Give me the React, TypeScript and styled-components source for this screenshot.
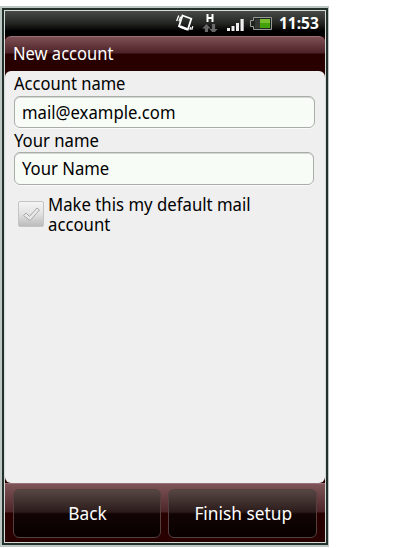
import React from "react";
import styled, { createGlobalStyle } from "styled-components";

const Global = createGlobalStyle`
  * { box-sizing: border-box; }
  body { margin: 0; background: #fff; }
`;

const Page = styled.div`
  width: 400px;
  height: 548px;
  padding-top: 6px;
  overflow: hidden;
  font-family: "Noto Sans", "Open Sans", sans-serif;
`;

const Bezel = styled.div`
  width: 329px;
  height: 541px;
  border: solid #bcc6c2;
  border-width: 2px 1px 2px 2px;
`;

const Rim = styled.div`
  height: 100%;
  border: 2px solid #23302c;
`;

const Screen = styled.div`
  height: 100%;
  border: 1px solid #d5dcd8;
  background: #280000;
  display: flex;
  flex-direction: column;
  overflow: hidden;
`;

const StatusBar = styled.div`
  height: 25px;
  flex: none;
  display: flex;
  justify-content: flex-end;
  background: linear-gradient(#484b48, #232522 50%, #000 80%);
`;

const TitleBar = styled.h1`
  margin: 0;
  height: 35px;
  flex: none;
  padding-left: 8px;
  border-top: 1px solid #987078;
  border-radius: 6px 6px 0 0;
  background: linear-gradient(#7d5053, #4c2228 16px, #280000 17px);
  box-shadow: 0 -6px 0 -2px #000;
  color: #fff;
  font-weight: 400;
`;

const Content = styled.main`
  height: 412px;
  flex: none;
  padding: 0 9px;
  border-radius: 6px;
  background: #efefef;
`;

const Text = styled.span<{ $size: number; $line: number; $condense?: number; $origin?: string }>`
  display: block;
  width: max-content;
  font-size: ${(p) => p.$size}px;
  line-height: ${(p) => p.$line}px;
  white-space: pre;
  transform: scaleX(${(p) => p.$condense ?? 1});
  transform-origin: ${(p) => p.$origin ?? "left"};
`;

const Field = styled.div<{ $width: number; $height: number }>`
  width: ${(p) => p.$width}px;
  height: ${(p) => p.$height}px;
  padding-left: 6.5px;
  border: 1px solid #a9aca9;
  border-radius: 6px;
  background: #f7fcf6;
  box-shadow: inset 0 1px 0 #d4d8d3, 0 1px 0 #fafafa;
`;

const CheckRow = styled.div`
  display: flex;
  gap: 3.5px;
  padding: 9px 0 0 4px;
`;

const CheckBox = styled.div`
  width: 26px;
  height: 26px;
  margin-top: 7px;
  border: 1px solid #c4c4c4;
  border-radius: 2px;
  background: linear-gradient(#f4f4f4, #e4e4e4 45%, #bcbcbc);
`;

const Footer = styled.footer`
  flex: 1;
  display: flex;
  gap: 7px;
  padding: 5px 8px 0;
  border-top: 1px solid #987078;
  background: linear-gradient(#7d5557, #4d2529 28px, #280000 29px);
`;

const Button = styled.div<{ $width: number }>`
  width: ${(p) => p.$width}px;
  height: 49px;
  display: flex;
  justify-content: center;
  padding-left: 1px;
  border: 1px solid #54403f;
  border-radius: 6px;
  background: linear-gradient(#564745, #2b1b1a 22px, #120404 24px, #080000);
  color: #fff;
`;

const StatusIcons = () => (
  <svg width="103" height="25" viewBox="175 11 103 25">
    <g fill="none" stroke="#fff">
      <path d="M182.5 15.5 L191.3 18.7 L187.8 29.5 L179 26.3 Z" strokeWidth="1.8" />
      <path d="M180 26.5 L187.6 29.4" strokeWidth="2.5" />
      <path d="M178.8 15.5 L176.6 21 M180.7 16.8 L178.9 21.2 M190.7 27.2 L189.9 29.8 M192.8 26.2 L191.7 29.8" strokeWidth="1.3" />
    </g>
    <path d="M206.5 14h2v3h3v-3h2v8h-2v-3h-3v3h-2z" fill="#fff" />
    <path d="M206.5 24l4.2 4.5h-2.6v4.5h-3.2v-4.5h-2.6zM213.5 33.5l-4.1-4.5h2.5V24h3.2v5h2.6z" fill="#686868" />
    <path d="M227 28h3v3h-3zM231.5 26h3v5h-3zM236 23h3v8h-3zM240.5 19h3.2v12h-3.2z" fill="#eee" />
    <path d="M253.5 17.5h18v12h-18v-3h-3v-6h3z" fill="#202220" stroke="#969c96" />
    <path d="M255 19h5v9h-5z" fill="#343634" />
    <path d="M260 19h10v5h-10z" fill="#78bd2d" />
    <path d="M260 23h10v5h-10z" fill="#42a009" />
  </svg>
);

const Clock = styled.time`
  width: 47px;
  padding-left: 1px;
  color: #fff;
  font-weight: 700;
`;

export default function App() {
  return (
    <Page>
      <Global />
      <Bezel>
        <Rim>
          <Screen>
            <StatusBar>
              <StatusIcons />
              <Clock>
                <Text $size={15.5} $line={25}>11:53</Text>
              </Clock>
            </StatusBar>
            <TitleBar>
              <Text $size={17.5} $line={33} $condense={0.945}>New account</Text>
            </TitleBar>
            <Content>
              <Text $size={17.5} $line={25} $condense={0.945}>Account name</Text>
              <Field $width={301} $height={32}>
                <Text $size={17.5} $line={31} $condense={0.953}>mail@example.com</Text>
              </Field>
              <Text $size={17.5} $line={24} $condense={0.953}>Your name</Text>
              <Field $width={300} $height={33}>
                <Text $size={17.5} $line={30} $condense={0.953}>Your Name</Text>
              </Field>
              <CheckRow>
                <CheckBox>
                  <svg width="24" height="24" viewBox="0 0 24 24" fill="none" strokeLinejoin="round">
                    <path d="M4.5 13.5l2.5-2.5 3.5 3.5 7.5-8.5 2.5 2L11 18.5z" stroke="#aaa" fill="#e9e9e9" />
                  </svg>
                </CheckBox>
                <Text $size={17.5} $line={20} $condense={0.957}>{"Make this my default mail\naccount"}</Text>
              </CheckRow>
            </Content>
            <Footer>
              <Button $width={148}>
                <Text $size={18.5} $line={46} $condense={0.935} $origin="center">Back</Text>
              </Button>
              <Button $width={149}>
                <Text $size={18.5} $line={46} $condense={0.935} $origin="center">Finish setup</Text>
              </Button>
            </Footer>
          </Screen>
        </Rim>
      </Bezel>
    </Page>
  );
}
